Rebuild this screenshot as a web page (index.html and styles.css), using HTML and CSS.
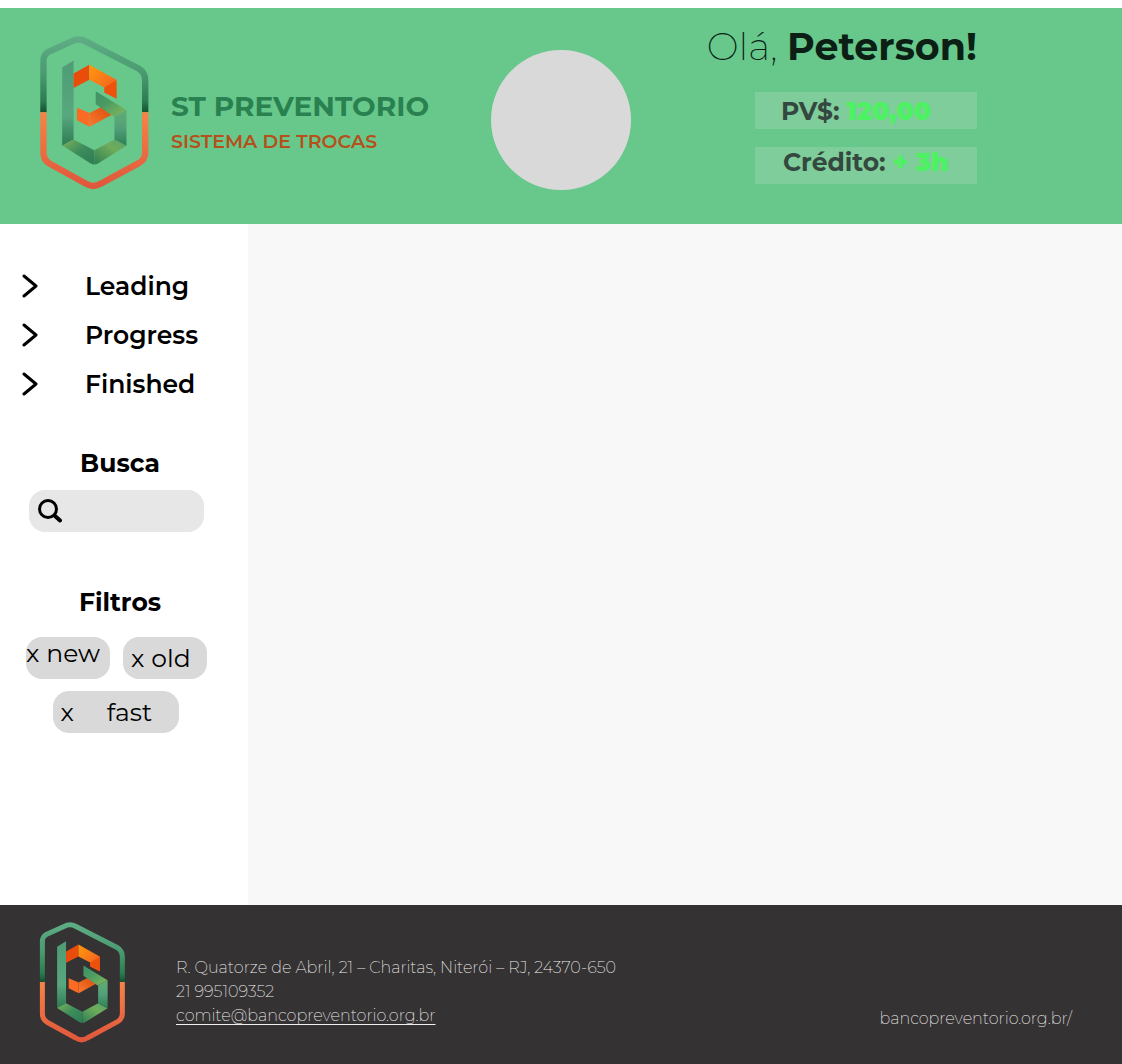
FILE: index.html
```html
<!DOCTYPE html>
<html lang="pt-BR">
<head>
  <meta charset="utf-8">
  <meta name="viewport" content="width=device-width, initial-scale=1">
  <title>ST Preventorio – Sistema de Trocas</title>
  <link rel="stylesheet" href="styles.css">
</head>
<body>
  <svg class="sprite" aria-hidden="true">
    <defs>
      <linearGradient id="frame-green" gradientUnits="userSpaceOnUse" x1="0" y1="50" x2="0" y2="278">
        <stop offset="0" stop-color="#5fae86"/><stop offset=".5" stop-color="#4a9a70"/><stop offset=".85" stop-color="#2c7d52"/><stop offset="1" stop-color="#145030"/>
      </linearGradient>
      <linearGradient id="frame-orange" gradientUnits="userSpaceOnUse" x1="0" y1="278" x2="0" y2="508">
        <stop offset="0" stop-color="#f58449"/><stop offset="1" stop-color="#e0553b"/>
      </linearGradient>
      <linearGradient id="stem" gradientUnits="userSpaceOnUse" x1="0" y1="124" x2="0" y2="378">
        <stop offset="0" stop-color="#4f9c75"/><stop offset=".65" stop-color="#57a77f"/><stop offset="1" stop-color="#2c7b50"/>
      </linearGradient>
      <linearGradient id="base-left" x1="0" y1="0" x2="1" y2="1">
        <stop offset="0" stop-color="#7db35c"/><stop offset=".5" stop-color="#3d8c5c"/><stop offset="1" stop-color="#2d7d53"/>
      </linearGradient>
      <linearGradient id="base-right" x1="1" y1="0" x2="0" y2="1">
        <stop offset="0" stop-color="#57a36a"/><stop offset=".4" stop-color="#6fac5b"/><stop offset="1" stop-color="#2d7d53"/>
      </linearGradient>
      <linearGradient id="fold" x1="0" y1="0" x2="1" y2="1">
        <stop offset="0" stop-color="#3f9167"/><stop offset=".4" stop-color="#4a9a63"/><stop offset="1" stop-color="#86ba5c"/>
      </linearGradient>
      <linearGradient id="side" x1="0" y1="0" x2="0" y2="1">
        <stop offset="0" stop-color="#63ad73"/><stop offset=".5" stop-color="#51a079"/><stop offset="1" stop-color="#2f7f53"/>
      </linearGradient>
      <linearGradient id="ember" x1="0" y1="0" x2="1" y2="1">
        <stop offset="0" stop-color="#ff9a0b"/><stop offset=".6" stop-color="#f6701d"/><stop offset="1" stop-color="#e9500f"/>
      </linearGradient>
      <linearGradient id="ember-low" x1="0" y1="1" x2="1" y2="0">
        <stop offset="0" stop-color="#fb7a30"/><stop offset="1" stop-color="#d94d0c"/>
      </linearGradient>
      <symbol id="logo" viewBox="62 50 325 460">
        <path d="M72 278V124Q72 106 87 97L156 66Q177 55 198 66L356 147Q376 159 376 182V278" fill="none" stroke="url(#frame-green)" stroke-width="19"/>
        <path d="M72 278V398Q72 420 90 431L199 491Q221 505 243 491L358 429Q376 418 376 398V278" fill="none" stroke="url(#frame-orange)" stroke-width="19"/>
        <path d="M128 144 162 123V359L128 378Z" fill="url(#stem)"/>
        <path d="M128 377 162 359 224 391V434Q218 434 212 430Z" fill="url(#base-left)"/>
        <path d="M224 391 284 359 320 378 236 430Q230 434 224 434Z" fill="url(#base-right)"/>
        <path d="M162 162 209 136V181L162 205Z" fill="#ea4c0b"/>
        <path d="M209 136 290 181V237L254 219V204L209 181Z" fill="url(#ember)"/>
        <path d="M254 204 290 183V237L254 219Z" fill="#ee510c"/>
        <path d="M172 264 210 280V321L172 302Z" fill="#fb6b23"/>
        <path d="M210 280 243 263 276 285 210 321Z" fill="url(#ember-low)"/>
        <path d="M228 215 320 271 282 291 228 254Z" fill="url(#fold)"/>
        <path d="M320 271V378L284 359V290Z" fill="url(#side)"/>
      </symbol>
      <symbol id="chevron" viewBox="0 0 16 24">
        <path d="M2 2 14 12 2 22" fill="none" stroke="#000" stroke-width="3" stroke-linecap="round" stroke-linejoin="round"/>
      </symbol>
    </defs>
  </svg>

  <header class="header">
    <div class="brand">
      <svg class="brand-logo" role="img" aria-label="ST Preventorio"><use href="#logo"/></svg>
      <div>
        <h1 class="brand-name">ST PREVENTORIO</h1>
        <p class="brand-tagline">SISTEMA DE TROCAS</p>
      </div>
    </div>
    <div class="avatar"></div>
    <div class="account">
      <p class="greeting">Olá, <strong>Peterson!</strong></p>
      <p class="balance">PV$: <span class="amount">120,00</span></p>
      <p class="balance credit">Crédito: <span class="amount">+ 3h</span></p>
    </div>
  </header>

  <div class="page">
    <aside class="sidebar">
      <nav class="menu">
        <a class="menu-link" href="#leading"><svg class="chevron" aria-hidden="true"><use href="#chevron"/></svg>Leading</a>
        <a class="menu-link" href="#progress"><svg class="chevron" aria-hidden="true"><use href="#chevron"/></svg>Progress</a>
        <a class="menu-link" href="#finished"><svg class="chevron" aria-hidden="true"><use href="#chevron"/></svg>Finished</a>
      </nav>
      <form class="search">
        <label class="section-title" for="search">Busca</label>
        <div class="search-box">
          <svg class="search-icon" viewBox="0 0 24 24" aria-hidden="true">
            <circle cx="10" cy="10" r="8.5" fill="none" stroke="#000" stroke-width="3"/>
            <path d="M16.500 16.500 22 21.500" stroke="#000" stroke-width="4" stroke-linecap="round"/>
          </svg>
          <input class="search-input" id="search" type="search">
        </div>
      </form>
      <section class="filters">
        <h2 class="section-title">Filtros</h2>
        <div class="chips">
          <button class="chip chip-top" type="button"><span>x</span><span>new</span></button>
          <button class="chip" type="button"><span>x</span><span>old</span></button>
          <button class="chip chip-wide" type="button"><span>x</span><span>fast</span></button>
        </div>
      </section>
    </aside>
    <main class="content"></main>
  </div>

  <footer class="footer">
    <svg class="footer-logo" role="img" aria-label="ST Preventorio"><use href="#logo"/></svg>
    <address class="contact">
      <span>R. Quatorze de Abril, 21 – Charitas, Niterói – RJ, 24370-650</span>
      <span>21 995109352</span>
      <a class="mail" href="mailto:comite@bancopreventorio.org.br">comite@bancopreventorio.org.br</a>
    </address>
    <a class="site" href="https://bancopreventorio.org.br/">bancopreventorio.org.br/</a>
  </footer>
</body>
</html>
```
FILE: styles.css
```css
* {
  box-sizing: border-box;
}

body {
  display: flex;
  flex-direction: column;
  min-height: 100vh;
  margin: 0;
  padding-top: 8px;
  background: #fff;
  color: #000;
  font-family: Montserrat, Inter, sans-serif;
}

h1, h2, p {
  margin: 0;
}

a {
  color: inherit;
  text-decoration: none;
}

.sprite {
  position: absolute;
  width: 0;
  height: 0;
}

/* Header */
.header {
  display: grid;
  grid-template-columns: 1fr 140px 1fr;
  align-items: start;
  min-height: 216px;
  background: #68c88c;
}

.brand {
  display: flex;
  align-items: center;
  gap: 22px;
  padding: 28px 0 0 40px;
}

.brand-logo {
  flex: none;
  width: 109px;
  height: 154px;
}

.brand-name {
  padding-top: 22px;
  color: #2a8150;
  font-size: 28px;
  font-weight: 700;
  line-height: 36px;
  white-space: nowrap;
}

.brand-tagline {
  color: #b5501a;
  font-size: 19px;
  font-weight: 600;
  line-height: 36px;
}

.avatar {
  height: 140px;
  margin-top: 42px;
  border-radius: 50%;
  background: #d9d9d9;
}

.account {
  display: flex;
  flex-direction: column;
  align-items: flex-end;
  gap: 18px;
  padding: 10px 145px 0 0;
}

.greeting {
  padding-top: 2px;
  color: #0c1f15;
  font-size: 38px;
  font-weight: 200;
  line-height: 54px;
  white-space: nowrap;
}

.greeting strong {
  font-weight: 700;
}

.balance {
  width: 222px;
  height: 37px;
  padding-left: 26px;
  background: #7ecd9a;
  color: #35483f;
  font-size: 25px;
  font-weight: 700;
  line-height: 38px;
  white-space: nowrap;
}

.credit {
  padding-left: 28px;
  line-height: 31px;
}

.amount {
  color: #4df163;
  font-weight: 900;
}

/* Sidebar and content */
.page {
  display: flex;
  flex: 1;
}

.sidebar {
  flex: none;
  width: 248px;
  padding-top: 37px;
}

.content {
  flex: 1;
  background: #f8f8f8;
}

.menu-link {
  display: flex;
  align-items: center;
  gap: 47px;
  height: 49px;
  padding-left: 22px;
  font-size: 25px;
  font-weight: 600;
}

.chevron {
  width: 16px;
  height: 24px;
}

.search,
.filters {
  width: 182px;
  margin-left: 26px;
}

.search {
  margin-top: 37px;
}

.filters {
  margin-top: 52px;
}

.section-title {
  display: block;
  padding-left: 6px;
  font-size: 25px;
  font-weight: 700;
  line-height: 36px;
  text-align: center;
}

.search-box {
  display: flex;
  align-items: center;
  gap: 8px;
  height: 42px;
  margin: 9px 4px 0 3px;
  padding: 0 9px;
  border-radius: 16px;
  background: #e7e7e7;
}

.search-icon {
  flex: none;
  width: 24px;
  height: 24px;
}

.search-input {
  width: 100%;
  min-width: 0;
  padding: 0;
  border: 0;
  outline: 0;
  background: transparent;
  font: inherit;
}

.chips {
  display: flex;
  flex-wrap: wrap;
  justify-content: center;
  gap: 12px 13px;
  width: 181px;
  margin-top: 17px;
}

.chip {
  display: flex;
  align-items: center;
  gap: 7px;
  width: 84px;
  height: 42px;
  padding: 0 8px;
  border: 0;
  border-radius: 16px;
  background: #d9d9d9;
  color: #000;
  font: inherit;
  font-size: 25px;
  line-height: 32px;
}

.chip-top {
  align-items: flex-start;
  padding: 0;
}

.chip-wide {
  gap: 33px;
  width: 126px;
  margin-right: 2px;
}

/* Footer */
.footer {
  display: flex;
  align-items: flex-start;
  min-height: 159px;
  padding: 17px 50px 20px 39px;
  background: #353233;
  color: #f0f0f0;
  font-size: 16px;
  font-weight: 200;
  line-height: 24px;
}

.footer-logo {
  flex: none;
  width: 87px;
  height: 121px;
}

.contact {
  display: flex;
  flex-direction: column;
  align-items: flex-start;
  margin: 34px auto 0 50px;
  font-style: normal;
}

.mail {
  text-decoration: underline;
  text-underline-offset: 3px;
}

.site {
  align-self: flex-end;
  margin-bottom: 13px;
}
```
